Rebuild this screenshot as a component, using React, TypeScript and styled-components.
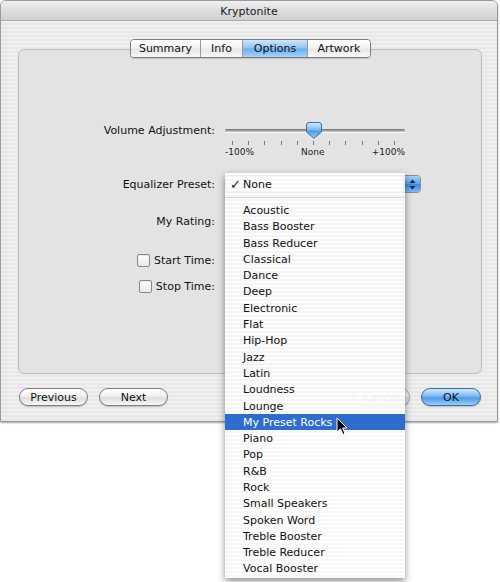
import React from "react";
import styled, { createGlobalStyle } from "styled-components";

const Global = createGlobalStyle`
  html, body { margin: 0; padding: 0; background: #ffffff; }
  body { font-family: "DejaVu Sans", "Liberation Sans", sans-serif; }
`;

const Page = styled.div`
  position: relative;
  width: 500px;
  height: 582px;
  overflow: hidden;
  background: #ffffff;
`;

const Window = styled.div`
  width: 496px;
  height: 420px;
  border: 1px solid #9a9a9a;
  border-radius: 6px 6px 0 0;
  display: flex;
  flex-direction: column;
  background: repeating-linear-gradient(
    to bottom,
    #efefef 0px,
    #efefef 2px,
    #e7e7e7 2px,
    #e7e7e7 4px
  );
  box-shadow: 0 1px 2px rgba(0, 0, 0, 0.35);
  overflow: hidden;
`;

const TitleBar = styled.div`
  flex-shrink: 0;
  height: 20px;
  box-sizing: border-box;
  border-bottom: 1px solid #a8a8a8;
  background: linear-gradient(to bottom, #f0f0f0 0%, #dcdcdc 55%, #cfcfcf 100%);
  display: flex;
  align-items: center;
  justify-content: center;
  font-size: 11px;
  color: #1a1a1a;
  padding-top: 1px;
`;

const Body = styled.div`
  display: flex;
  flex-direction: column;
  padding: 0 15px 0 17px;
`;

const TabRow = styled.div`
  display: flex;
  justify-content: center;
  margin-top: 18px;
  margin-bottom: -9px;
  position: relative;
  z-index: 1;
  padding-left: 1px;
`;

const Tabs = styled.div`
  display: flex;
  height: 17px;
  border: 1px solid #7d7d7d;
  border-radius: 4px;
  overflow: hidden;
  box-shadow: 0 1px 1px rgba(0, 0, 0, 0.15);
`;

const Tab = styled.div<{ $w: number; $active?: boolean; $last?: boolean }>`
  width: ${(p) => p.$w}px;
  display: flex;
  align-items: center;
  justify-content: center;
  font-size: 11px;
  color: #111;
  border-right: ${(p) => (p.$last ? "none" : "1px solid #9a9a9a")};
  background: ${(p) =>
    p.$active
      ? "linear-gradient(to bottom, #cfe5fb 0%, #8fc3f4 48%, #6aaef0 52%, #a9d3f8 100%)"
      : "linear-gradient(to bottom, #ffffff 0%, #f2f2f2 48%, #e6e6e6 52%, #f8f8f8 100%)"};
`;

const GroupBox = styled.div`
  flex-shrink: 0;
  height: 325px;
  box-sizing: border-box;
  border: 1px solid #bdbdbd;
  border-radius: 6px;
  background: #e3e3e3;
  display: flex;
  flex-direction: column;
  padding-top: 72px;
`;

const Row = styled.div<{ $top: number; $h: number }>`
  display: flex;
  align-items: flex-start;
  margin-top: ${(p) => p.$top}px;
  min-height: ${(p) => p.$h}px;
`;

const Label = styled.div<{ $h: number }>`
  width: 196px;
  height: ${(p) => p.$h}px;
  display: flex;
  align-items: center;
  justify-content: flex-end;
  gap: 3px;
  font-size: 11px;
  color: #111;
  margin-right: 10px;
  white-space: nowrap;
`;

const Checkbox = styled.span`
  width: 11px;
  height: 11px;
  border: 1px solid #8a8a8a;
  border-radius: 2px;
  background: linear-gradient(to bottom, #ffffff, #e9e9e9);
  box-shadow: inset 0 1px 1px rgba(0, 0, 0, 0.1);
  margin-right: 1px;
`;

const Slider = styled.div`
  width: 180px;
  display: flex;
  flex-direction: column;
  position: relative;
`;

const TrackArea = styled.div`
  height: 16px;
  display: flex;
  align-items: center;
`;

const Track = styled.div`
  width: 180px;
  height: 3px;
  border-radius: 2px;
  background: linear-gradient(to bottom, #6e6e6e, #a9a9a9 60%, #cfcfcf);
  box-shadow: 0 1px 0 rgba(255, 255, 255, 0.7);
`;

const Thumb = styled.svg`
  position: absolute;
  left: 81px;
  top: 0px;
`;

const Ticks = styled.div`
  display: flex;
  justify-content: space-between;
  padding: 3px 10px 0 7px;
  height: 5px;
`;

const TickMark = styled.span`
  width: 1px;
  height: 4px;
  background: #7a7a7a;
`;

const ScaleLabels = styled.div`
  display: flex;
  justify-content: space-between;
  font-size: 9px;
  color: #222;
  line-height: 10px;
  margin-top: 1px;
`;

const PopupButton = styled.div`
  width: 196px;
  height: 18px;
  border: 1px solid #8b8b8b;
  border-radius: 4px;
  box-sizing: border-box;
  display: flex;
  justify-content: flex-end;
  background: linear-gradient(to bottom, #ffffff, #e8e8e8);
  overflow: hidden;
`;

const PopupArrows = styled.div`
  width: 16px;
  height: 100%;
  display: flex;
  align-items: center;
  justify-content: center;
  background: linear-gradient(to bottom, #a8d0f7 0%, #5a9fe9 50%, #3e86dd 52%, #7db9f2 100%);
  border-left: 1px solid #4d7fb8;
`;

const ButtonRow = styled.div`
  flex-shrink: 0;
  display: flex;
  align-items: center;
  margin-top: 14px;
  gap: 11px;
  padding-right: 1px;
  padding-left: 1px;
`;

const Spacer = styled.div`
  flex: 1;
`;

const AquaButton = styled.div<{ $w: number; $kind?: "default" | "primary" | "dim" }>`
  width: ${(p) => p.$w}px;
  height: 18px;
  box-sizing: border-box;
  border-radius: 9px;
  display: flex;
  align-items: center;
  justify-content: center;
  font-size: 11px;
  border: 1px solid
    ${(p) => (p.$kind === "primary" ? "#3a6ea5" : p.$kind === "dim" ? "#a8a8a8" : "#7f7f7f")};
  color: ${(p) => (p.$kind === "dim" ? "#8c8c8c" : "#111")};
  background: ${(p) =>
    p.$kind === "primary"
      ? "linear-gradient(to bottom, #d3e8fc 0%, #7cb8f3 45%, #4d9aea 55%, #9ccdf8 100%)"
      : "linear-gradient(to bottom, #ffffff 0%, #f0f0f0 45%, #dedede 55%, #f6f6f6 100%)"};
  box-shadow: 0 1px 1px rgba(0, 0, 0, 0.2);
`;

const Menu = styled.div`
  position: absolute;
  left: 225px;
  top: 173px;
  width: 180px;
  height: 405px;
  box-sizing: border-box;
  padding-top: 3px;
  background: repeating-linear-gradient(
    to bottom,
    rgba(255, 255, 255, 0.9) 0px,
    rgba(255, 255, 255, 0.9) 2px,
    rgba(246, 246, 246, 0.9) 2px,
    rgba(246, 246, 246, 0.9) 4px
  );
  box-shadow: 0 3px 7px rgba(0, 0, 0, 0.45);
  z-index: 5;
`;

const MenuItem = styled.div<{ $selected?: boolean }>`
  height: 16.3px;
  display: flex;
  align-items: center;
  padding-left: 18px;
  position: relative;
  font-size: 11px;
  color: ${(p) => (p.$selected ? "#ffffff" : "#111")};
  background: ${(p) => (p.$selected ? "#2f6ccf" : "transparent")};
  white-space: nowrap;
`;

const Check = styled.span`
  position: absolute;
  left: 5px;
  font-size: 13px;
  color: #222;
`;

const Separator = styled.div`
  height: 10px;
  display: flex;
  align-items: center;
  &::after {
    content: "";
    flex: 1;
    height: 1px;
    background: #d6d6d6;
  }
`;

const Cursor = styled.svg`
  position: absolute;
  left: 336px;
  top: 417px;
  z-index: 6;
`;

const presets = [
  "Acoustic",
  "Bass Booster",
  "Bass Reducer",
  "Classical",
  "Dance",
  "Deep",
  "Electronic",
  "Flat",
  "Hip-Hop",
  "Jazz",
  "Latin",
  "Loudness",
  "Lounge",
  "My Preset Rocks",
  "Piano",
  "Pop",
  "R&B",
  "Rock",
  "Small Speakers",
  "Spoken Word",
  "Treble Booster",
  "Treble Reducer",
  "Vocal Booster",
];

export default function App() {
  return (
    <Page>
      <Global />
      <Window>
        <TitleBar>Kryptonite</TitleBar>
        <Body>
          <TabRow>
            <Tabs>
              <Tab $w={69}>Summary</Tab>
              <Tab $w={41}>Info</Tab>
              <Tab $w={64} $active>
                Options
              </Tab>
              <Tab $w={62} $last>
                Artwork
              </Tab>
            </Tabs>
          </TabRow>
          <GroupBox>
            <Row $top={0} $h={35}>
              <Label $h={16}>Volume Adjustment:</Label>
              <Slider>
                <TrackArea>
                  <Track />
                </TrackArea>
                <Thumb width="16" height="17" viewBox="0 0 16 17">
                  <defs>
                    <linearGradient id="tg" x1="0" y1="0" x2="0" y2="1">
                      <stop offset="0" stopColor="#d6ebfd" />
                      <stop offset="0.45" stopColor="#7fbaf3" />
                      <stop offset="0.55" stopColor="#4f9be9" />
                      <stop offset="1" stopColor="#9fd0f8" />
                    </linearGradient>
                  </defs>
                  <path
                    d="M3 0.5 H13 A2.5 2.5 0 0 1 15.5 3 V10 L8 16.3 L0.5 10 V3 A2.5 2.5 0 0 1 3 0.5 Z"
                    fill="url(#tg)"
                    stroke="#3f6f9f"
                    strokeWidth="1"
                  />
                </Thumb>
                <Ticks>
                  {Array.from({ length: 11 }).map((_, i) => (
                    <TickMark key={i} />
                  ))}
                </Ticks>
                <ScaleLabels>
                  <span>-100%</span>
                  <span>None</span>
                  <span>+100%</span>
                </ScaleLabels>
              </Slider>
            </Row>
            <Row $top={18} $h={18}>
              <Label $h={18}>Equalizer Preset:</Label>
              <PopupButton>
                <PopupArrows>
                  <svg width="7" height="11" viewBox="0 0 7 11">
                    <path d="M3.5 0.5 L6.5 4 H0.5 Z" fill="#0d2a55" />
                    <path d="M3.5 10.5 L6.5 7 H0.5 Z" fill="#0d2a55" />
                  </svg>
                </PopupArrows>
              </PopupButton>
            </Row>
            <Row $top={20} $h={16}>
              <Label $h={16}>My Rating:</Label>
            </Row>
            <Row $top={23} $h={16}>
              <Label $h={16}>
                <Checkbox />
                Start Time:
              </Label>
            </Row>
            <Row $top={10} $h={16}>
              <Label $h={16}>
                <Checkbox />
                Stop Time:
              </Label>
            </Row>
          </GroupBox>
          <ButtonRow>
            <AquaButton $w={69}>Previous</AquaButton>
            <AquaButton $w={69}>Next</AquaButton>
            <Spacer />
            <AquaButton $w={57} $kind="dim">
              Cancel
            </AquaButton>
            <AquaButton $w={60} $kind="primary">
              OK
            </AquaButton>
          </ButtonRow>
        </Body>
      </Window>
      <Menu>
        <MenuItem>
          <Check>✓</Check>None
        </MenuItem>
        <Separator />
        {presets.map((p) => (
          <MenuItem key={p} $selected={p === "My Preset Rocks"}>
            {p}
          </MenuItem>
        ))}
      </Menu>
      <Cursor width="12" height="19" viewBox="0 0 12 19">
        <path
          d="M1 1 V15 L4.5 11.8 L7 17.5 L9 16.6 L6.6 11 H11 Z"
          fill="#000"
          stroke="#fff"
          strokeWidth="1"
          strokeLinejoin="round"
        />
      </Cursor>
    </Page>
  );
}
